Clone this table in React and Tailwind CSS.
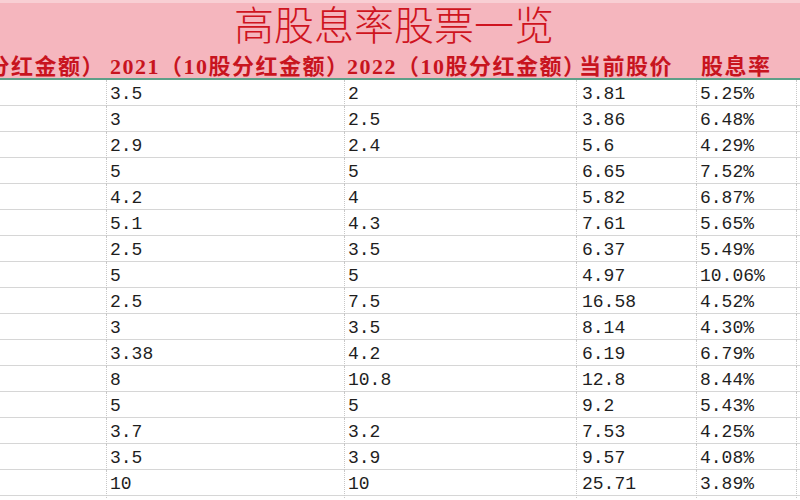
import React from "react";

const rows = [
  ["3.5", "2", "3.81", "5.25%"],
  ["3", "2.5", "3.86", "6.48%"],
  ["2.9", "2.4", "5.6", "4.29%"],
  ["5", "5", "6.65", "7.52%"],
  ["4.2", "4", "5.82", "6.87%"],
  ["5.1", "4.3", "7.61", "5.65%"],
  ["2.5", "3.5", "6.37", "5.49%"],
  ["5", "5", "4.97", "10.06%"],
  ["2.5", "7.5", "16.58", "4.52%"],
  ["3", "3.5", "8.14", "4.30%"],
  ["3.38", "4.2", "6.19", "6.79%"],
  ["8", "10.8", "12.8", "8.44%"],
  ["5", "5", "9.2", "5.43%"],
  ["3.7", "3.2", "7.53", "4.25%"],
  ["3.5", "3.9", "9.57", "4.08%"],
  ["10", "10", "25.71", "3.89%"],
];

const cols = "grid grid-cols-[107px_238px_232px_120px_100px_1fr]";
const serif = { fontFamily: '"Liberation Serif", "Noto Sans CJK SC", serif' };

export default function App() {
  return (
    <div className="w-[800px] h-[500px] overflow-hidden bg-white">
      {/* title + header band */}
      <div className="bg-[#f5b6be] border-t-[3px] border-[#f8cfd4]">
        <div
          className="h-[47px] flex items-center justify-center pr-[12px] text-[40px] font-light leading-none text-[#cf1420]"
          style={serif}
        >
          高股息率股票一览
        </div>
        <div
          className={`${cols} h-[30px] items-center text-[22px] font-bold tracking-[1.5px] text-[#c8141e] whitespace-nowrap border-b-2 border-[#5e9f88]`}
          style={serif}
        >
          <div className="overflow-hidden flex justify-end pr-[2px]">
            <span>2020（10股分红金额）</span>
          </div>
          <div className="pl-[3px]">2021（10股分红金额）</div>
          <div className="pl-[2px]">2022（10股分红金额）</div>
          <div className="pl-[2px]">当前股价</div>
          <div className="pl-[4px]">股息率</div>
          <div />
        </div>
      </div>

      {/* data rows */}
      <div
        className="text-[18px] text-[#1e1e1e]"
        style={{ fontFamily: '"Liberation Mono", monospace' }}
      >
        {rows.map((r, i) => (
          <div key={i} className={`${cols} h-[26px] border-b border-[#d6d6d6]`}>
            <div className="border-r border-dotted border-[#c8c8c8]" />
            {r.map((v, j) => (
              <div
                key={j}
                className={`flex items-center pt-[1px] border-r border-dotted border-[#c8c8c8] ${
                  j === 2 ? "pl-[5px]" : "pl-[3px]"
                }`}
              >
                {v}
              </div>
            ))}
            <div />
          </div>
        ))}
      </div>
    </div>
  );
}
